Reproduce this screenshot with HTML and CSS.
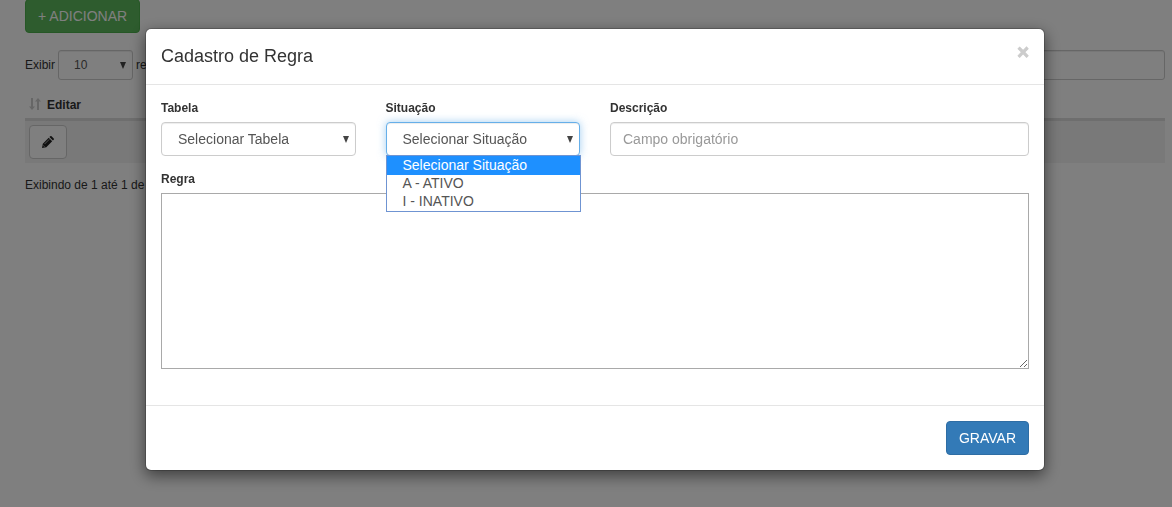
FILE: index.html
```html
<!DOCTYPE html>
<html lang="pt-BR">
<head>
<meta charset="utf-8">
<title>Cadastro de Regra</title>
<link rel="stylesheet" href="styles.css">
</head>
<body>
<main class="page">
  <button type="button" class="btn btn-success">+ ADICIONAR</button>
  <div class="toolbar">
    <label class="length" for="length">Exibir
      <span class="select-wrap select-small"><select id="length" class="control"><option>10</option></select></span>
      re</label>
    <input class="control search" type="search" aria-label="Pesquisar">
  </div>
  <table class="grid">
    <thead>
      <tr><th>
        <span class="th-inner">
          <svg class="sort" viewBox="0 0 12 12" aria-hidden="true"><path d="M2 0h2v8.500h2L3 12 0 8.500h2zM8 12h2V3.500h2L9 0 6 3.500h2z"/></svg>
          Editar
        </span>
      </th></tr>
    </thead>
    <tbody>
      <tr><td>
        <button type="button" class="btn btn-default" aria-label="Editar">
          <svg class="pencil" viewBox="0 0 12 12" aria-hidden="true"><path d="M0 12l.8-4.300L6.700 1.800l3.500 3.500L4.300 11.200zM7.400 1.100L8.200.3q.7-.6 1.400 0L11.700 2.400q.6.700 0 1.400l-.8.8z"/><path class="shine" d="M2.600 8L7.200 3.400M1.200 9.400l1.400 1.400"/></svg>
        </button>
      </td></tr>
    </tbody>
  </table>
  <p class="info">Exibindo de 1 até 1 de</p>
</main>

<div class="backdrop">
  <form class="modal" role="dialog" aria-labelledby="title">
    <header class="modal-header">
      <h1 id="title" class="modal-title">Cadastro de Regra</h1>
      <button type="button" class="close" aria-label="Fechar">×</button>
    </header>
    <div class="modal-body">
      <div class="row">
        <div class="field">
          <label for="tabela">Tabela</label>
          <span class="select-wrap"><select id="tabela" class="control"><option>Selecionar Tabela</option></select></span>
        </div>
        <div class="field">
          <label for="situacao">Situação</label>
          <span class="select-wrap">
            <select id="situacao" class="control active"><option>Selecionar Situação</option><option>A - ATIVO</option><option>I - INATIVO</option></select>
            <ul class="options" role="listbox" aria-label="Situação">
              <li role="option" aria-selected="true" class="selected">Selecionar Situação</li>
              <li role="option">A - ATIVO</li>
              <li role="option">I - INATIVO</li>
            </ul>
          </span>
        </div>
        <div class="field field-wide">
          <label for="descricao">Descrição</label>
          <input id="descricao" class="control" type="text" placeholder="Campo obrigatório">
        </div>
      </div>
      <div class="rule">
        <label for="regra">Regra</label>
        <textarea id="regra" class="rule-text"></textarea>
      </div>
    </div>
    <footer class="modal-footer">
      <button type="button" class="btn btn-primary">GRAVAR</button>
    </footer>
  </form>
</div>
</body>
</html>
```

FILE: styles.css
```css
* { box-sizing: border-box; }

body {
  margin: 0;
  min-height: 100vh;
  overflow: hidden;
  background: #fff;
  color: #333;
  font: 12px/17px "Liberation Sans", Arial, sans-serif;
}

.page { padding: 0 7px 0 25px; }

.btn {
  display: inline-block;
  height: 34px;
  padding: 6px 12px;
  border: 1px solid transparent;
  border-radius: 4px;
  font: 14px/20px "Liberation Sans", Arial, sans-serif;
}
.btn-success { display: block; margin-top: -1px; background: #5cb85c; border-color: #4cae4c; color: #fff; }
.btn-primary { background: #337ab7; border-color: #2e6da4; color: #fff; }
.btn-default { display: block; background: #fff; border-color: #ccc; color: #333; }

.control {
  display: block;
  width: 100%;
  height: 34px;
  padding: 6px 12px;
  border: 1px solid #ccc;
  border-radius: 4px;
  background: #fff;
  box-shadow: inset 0 1px 1px rgba(0, 0, 0, .075);
  color: #555;
  font: 14px/20px "Liberation Sans", Arial, sans-serif;
  appearance: none;
}
select.control { padding-left: 16px; }
.control::placeholder { color: #999; opacity: 1; }
.control.active {
  border-color: #66afe9;
  box-shadow: inset 0 1px 1px rgba(0, 0, 0, .075), 0 0 8px rgba(102, 175, 233, .6);
}

.select-wrap { position: relative; display: block; }
.select-wrap::after {
  content: "";
  position: absolute;
  top: 14px;
  right: 7px;
  border: solid transparent;
  border-width: 7px 3px 0;
  border-top-color: #444;
  pointer-events: none;
}

.toolbar { display: flex; justify-content: space-between; margin-top: 17px; }
.length { display: flex; align-items: center; gap: 3px; height: 30px; white-space: nowrap; }
.select-small { width: 75px; }
.select-small .control, .search { height: 30px; padding-top: 4px; padding-bottom: 4px; border-radius: 3px; }
.select-small .control { padding-left: 15px; font-size: 12px; }
.select-small::after { top: 12px; }
.search { width: 50%; }

.grid { width: 100%; margin-top: 12px; border-collapse: collapse; }
.grid th { padding: 4px; border-bottom: 3px solid #ddd; text-align: left; }
.grid td { padding: 4px; background: #f3f3f3; }
.th-inner { display: flex; align-items: center; gap: 6px; height: 18px; }
.sort { width: 12px; height: 12px; margin-bottom: 2px; fill: #ccc; }
.pencil { display: block; width: 12px; height: 12px; fill: #222; }
.shine { fill: none; stroke: #fff; stroke-width: 0.600; }
.info { margin: 14px 0 0; }

.backdrop {
  position: fixed;
  inset: 0;
  padding: 28px 127px 0 145px;
  background: rgba(0, 0, 0, .5);
}

.modal {
  border: 1px solid rgba(0, 0, 0, .2);
  border-radius: 6px;
  background: #fff;
  background-clip: padding-box;
  box-shadow: 0 5px 15px rgba(0, 0, 0, .5);
}
.modal-header {
  display: flex;
  justify-content: space-between;
  align-items: flex-start;
  padding: 15px;
  border-bottom: 1px solid #e5e5e5;
}
.modal-title { margin: 0; font-size: 18px; font-weight: 400; line-height: 25px; }
.close {
  padding: 0;
  border: 0;
  background: none;
  color: #ccc;
  -webkit-text-stroke: 1px #ccc;
  font: bold 20px/16px "Liberation Sans", Arial, sans-serif;
}

.modal-body { padding: 15px 15px 36px; }
.modal-body label { display: block; margin-bottom: 5px; font-weight: 700; }
.row { display: flex; margin: 0 -15px; }
.field { width: 25%; padding: 0 15px; }
.field-wide { width: 50%; }
.rule { margin-top: 15px; }
.rule-text {
  display: block;
  width: 100%;
  height: 176px;
  border: 1px solid #a9a9a9;
  resize: both;
}

.options {
  position: absolute;
  z-index: 1;
  top: 33px;
  left: 0;
  right: -1px;
  margin: 0;
  padding: 0 0 1px;
  border: 1px solid #6f94d2;
  background: #fff;
  color: #555;
  font-size: 14px;
  line-height: 18px;
  list-style: none;
}
.options li { padding-left: 16px; }
.options .selected { margin-bottom: -1px; padding-bottom: 1px; background: #1e90ff; color: #fff; }

.modal-footer { padding: 15px; border-top: 1px solid #e5e5e5; text-align: right; }
.modal-footer .btn { display: block; margin-left: auto; }
```
